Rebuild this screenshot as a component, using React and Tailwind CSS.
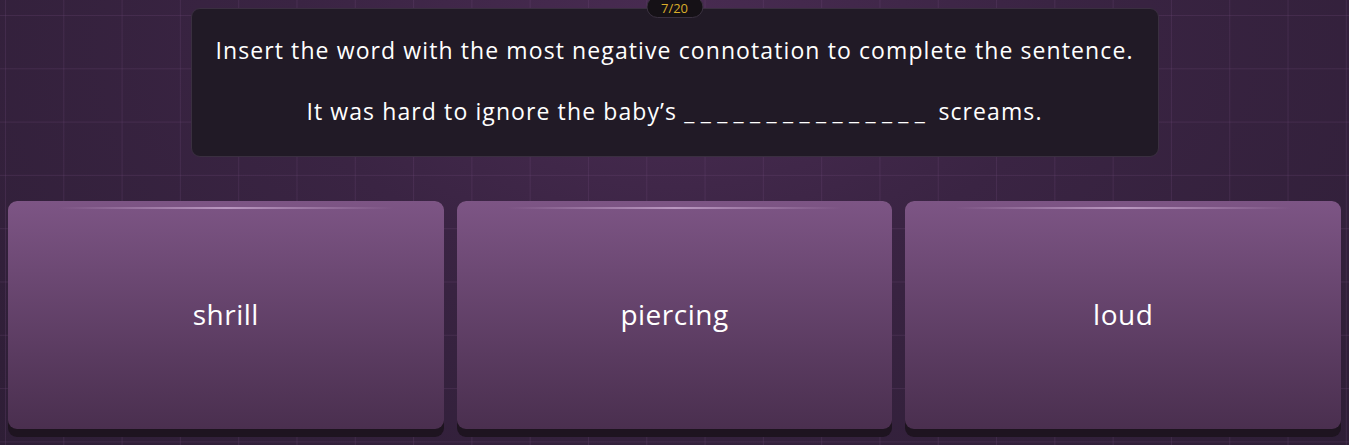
import React from "react";

const font = { fontFamily: "'Open Sans', 'Noto Sans', sans-serif" };

function Answer({ label }) {
  return (
    <div className="relative flex-1 h-[236px] rounded-[9px] bg-[#1e1420]">
      <div className="relative h-[228px] rounded-[9px] bg-gradient-to-b from-[#7d5585] to-[#4a2f4f] flex items-center justify-center">
        <div className="absolute top-[6px] left-[50px] right-[50px] h-[2px] bg-gradient-to-r from-transparent via-[#c9a8cf] to-transparent opacity-80" />
        <span className="text-white text-[28px] tracking-[0.5px] mt-[-2px]">{label}</span>
      </div>
    </div>
  );
}

export default function App() {
  return (
    <div
      className="relative w-[1349px] h-[445px] overflow-hidden bg-[radial-gradient(ellipse_at_50%_10%,#4a2c53_0%,#3a2443_40%,#2e1e36_100%)]"
      style={font}
    >
      <div className="absolute inset-0 bg-[linear-gradient(to_right,rgba(120,80,130,0.22)_1px,transparent_1px),linear-gradient(to_bottom,rgba(120,80,130,0.22)_1px,transparent_1px)] bg-[length:58.3px_53.3px] bg-[position:5px_15px]" />
      <div className="relative flex flex-col items-center px-2 pt-2">
        <div className="absolute top-0 left-1/2 -translate-x-1/2 z-10 h-[22px] px-[14px] rounded-[12px] bg-[#151116] border border-[#3a3140] flex items-center text-[13px] text-[#d9ad2a] -mt-[4px] pt-[3px]">
          7/20
        </div>
        <div className="w-[968px] h-[149px] rounded-[9px] bg-[#211a26] border border-[#3a2f40] flex flex-col items-center text-white">
          <p className="text-[23px] mt-[26px] leading-[30px] tracking-[1.1px] whitespace-nowrap">Insert the word with the most negative connotation to complete the sentence.</p>
          <p className="text-[23px] mt-[31px] leading-[30px] tracking-[1.1px] whitespace-nowrap">
            It was hard to ignore the baby’s{" "}
            <span className="tracking-[6.4px]">_______________</span> screams.
          </p>
        </div>
        <div className="w-full flex gap-[13px] mt-[44px]">
          <Answer label="shrill" />
          <Answer label="piercing" />
          <Answer label="loud" />
        </div>
      </div>
    </div>
  );
}
